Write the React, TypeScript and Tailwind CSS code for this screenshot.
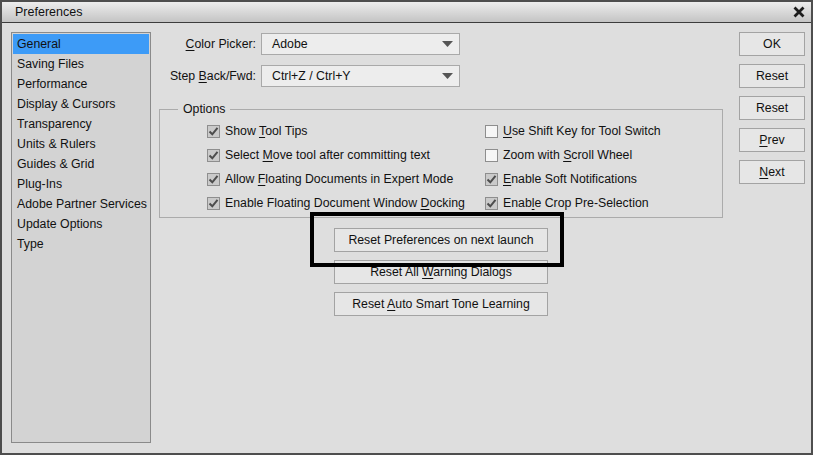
import React from "react";

const FONT = "font-['Liberation_Sans',Arial,sans-serif]";

const PAGES = [
  "General",
  "Saving Files",
  "Performance",
  "Display & Cursors",
  "Transparency",
  "Units & Rulers",
  "Guides & Grid",
  "Plug-Ins",
  "Adobe Partner Services",
  "Update Options",
  "Type",
];

// access key underline
function K({ children }: { children: React.ReactNode }) {
  return <span className="underline underline-offset-[2px] decoration-1">{children}</span>;
}

function Check({ checked, children }: { checked: boolean; children: React.ReactNode }) {
  return (
    <div className="flex items-center h-[24px]">
      <div
        className={
          "w-[13px] h-[13px] border flex items-center justify-center " +
          (checked ? "bg-[#cacaca] border-[#8e8e8e]" : "bg-[#f6f6f6] border-[#8e8e8e]")
        }
      >
        {checked && (
          <svg width="11" height="11" viewBox="0 0 11 11">
            <path d="M1.5 5.5 L4.3 8.3 L9.5 1.8" fill="none" stroke="#4d4d4d" strokeWidth="2" />
          </svg>
        )}
      </div>
      <span className="ml-[5px] whitespace-nowrap">{children}</span>
    </div>
  );
}

function Select({ value }: { value: string }) {
  return (
    <div className="w-[199px] h-[22px] bg-[#ededed] border border-[#a9a9a9] flex items-center justify-between pl-[10px] pr-[6px]">
      <span>{value}</span>
      <svg width="11" height="6" viewBox="0 0 11 6">
        <path d="M0 0 H11 L5.5 6 Z" fill="#555" />
      </svg>
    </div>
  );
}

function Btn({ children, className = "" }: { children: React.ReactNode; className?: string }) {
  return (
    <div
      className={
        "h-[24px] bg-[#e6e6e6] border border-[#a3a3a3] flex items-center justify-center whitespace-nowrap " +
        className
      }
    >
      <span>{children}</span>
    </div>
  );
}

export default function App() {
  return (
    <div
      className={`${FONT} relative w-[813px] h-[455px] bg-[#dedede] border-2 border-[#4e4e4e] flex flex-col text-[12.3px] leading-[15px] text-[#111]`}
    >
      {/* title bar */}
      <div className="h-[21px] shrink-0 border-b border-[#3c3c3c] bg-gradient-to-b from-[#ededed] to-[#c4c4c4] flex items-center justify-between pl-[13px] pr-[6px]">
        <span className="text-[12.5px]">Preferences</span>
        <svg width="12" height="12" viewBox="0 0 12 12">
          <path d="M1.5 1.5 L10.5 10.5 M10.5 1.5 L1.5 10.5" stroke="#1c1c1c" strokeWidth="2.8" />
        </svg>
      </div>

      <div className="flex-1 flex pt-[9px] pl-[9px] pr-[6px] pb-[10px]">
        {/* page list */}
        <div className="w-[140px] border border-[#8a8a8a] bg-[#d3d3d3] p-px">
          {PAGES.map((p, i) => (
            <div
              key={p}
              className={
                "h-[20px] flex items-center pl-[4px] whitespace-nowrap " +
                (i === 0 ? "bg-[#3d9bf7] h-[19px]" : "")
              }
            >
              {p}
            </div>
          ))}
        </div>

        {/* main panel */}
        <div className="ml-[8px] w-[564px] flex flex-col pt-[1px]">
          <div className="flex items-center">
            <div className="w-[97px] text-right">
              <K>C</K>olor Picker:
            </div>
            <div className="ml-[5px]">
              <Select value="Adobe" />
            </div>
          </div>
          <div className="flex items-center mt-[10px]">
            <div className="w-[97px] text-right">
              Step <K>B</K>ack/Fwd:
            </div>
            <div className="ml-[5px]">
              <Select value="Ctrl+Z / Ctrl+Y" />
            </div>
          </div>

          <fieldset className="mt-[15px] border border-[#ababab] pb-[2px]">
            <legend className="ml-[18px] px-[5px] leading-[14px]">Options</legend>
            <div className="grid grid-cols-[278px_1fr] pt-[3px] pl-[47px]">
              <div className="flex flex-col">
                <Check checked>
                  Show <K>T</K>ool Tips
                </Check>
                <Check checked>
                  Select <K>M</K>ove tool after committing text
                </Check>
                <Check checked>
                  Allow <K>F</K>loating Documents in Expert Mode
                </Check>
                <Check checked>
                  Enable Floating Document Window <K>D</K>ocking
                </Check>
              </div>
              <div className="flex flex-col">
                <Check checked={false}>
                  <K>U</K>se Shift Key for Tool Switch
                </Check>
                <Check checked={false}>
                  Zoom with <K>S</K>croll Wheel
                </Check>
                <Check checked>
                  <K>E</K>nable Soft Notifications
                </Check>
                <Check checked>
                  Enab<K>l</K>e Crop Pre-Selection
                </Check>
              </div>
            </div>
          </fieldset>

          <div className="mt-[10px] flex flex-col items-center gap-[8px]">
            <Btn className="w-[214px]">Reset Preferences on next launch</Btn>
            <Btn className="w-[214px]">
              Reset All <K>W</K>arning Dialogs
            </Btn>
            <Btn className="w-[214px]">
              Reset <K>A</K>uto Smart Tone Learning
            </Btn>
          </div>
        </div>

        {/* action buttons */}
        <div className="ml-[16px] w-[66px] flex flex-col gap-[8px]">
          <Btn>OK</Btn>
          <Btn>Reset</Btn>
          <Btn>Reset</Btn>
          <Btn>
            <K>P</K>rev
          </Btn>
          <Btn>
            <K>N</K>ext
          </Btn>
        </div>
      </div>

      {/* highlight frame drawn over the dialog */}
      <div className="absolute left-[308px] top-[210px] w-[254px] h-[55px] border-4 border-black pointer-events-none" />
    </div>
  );
}
